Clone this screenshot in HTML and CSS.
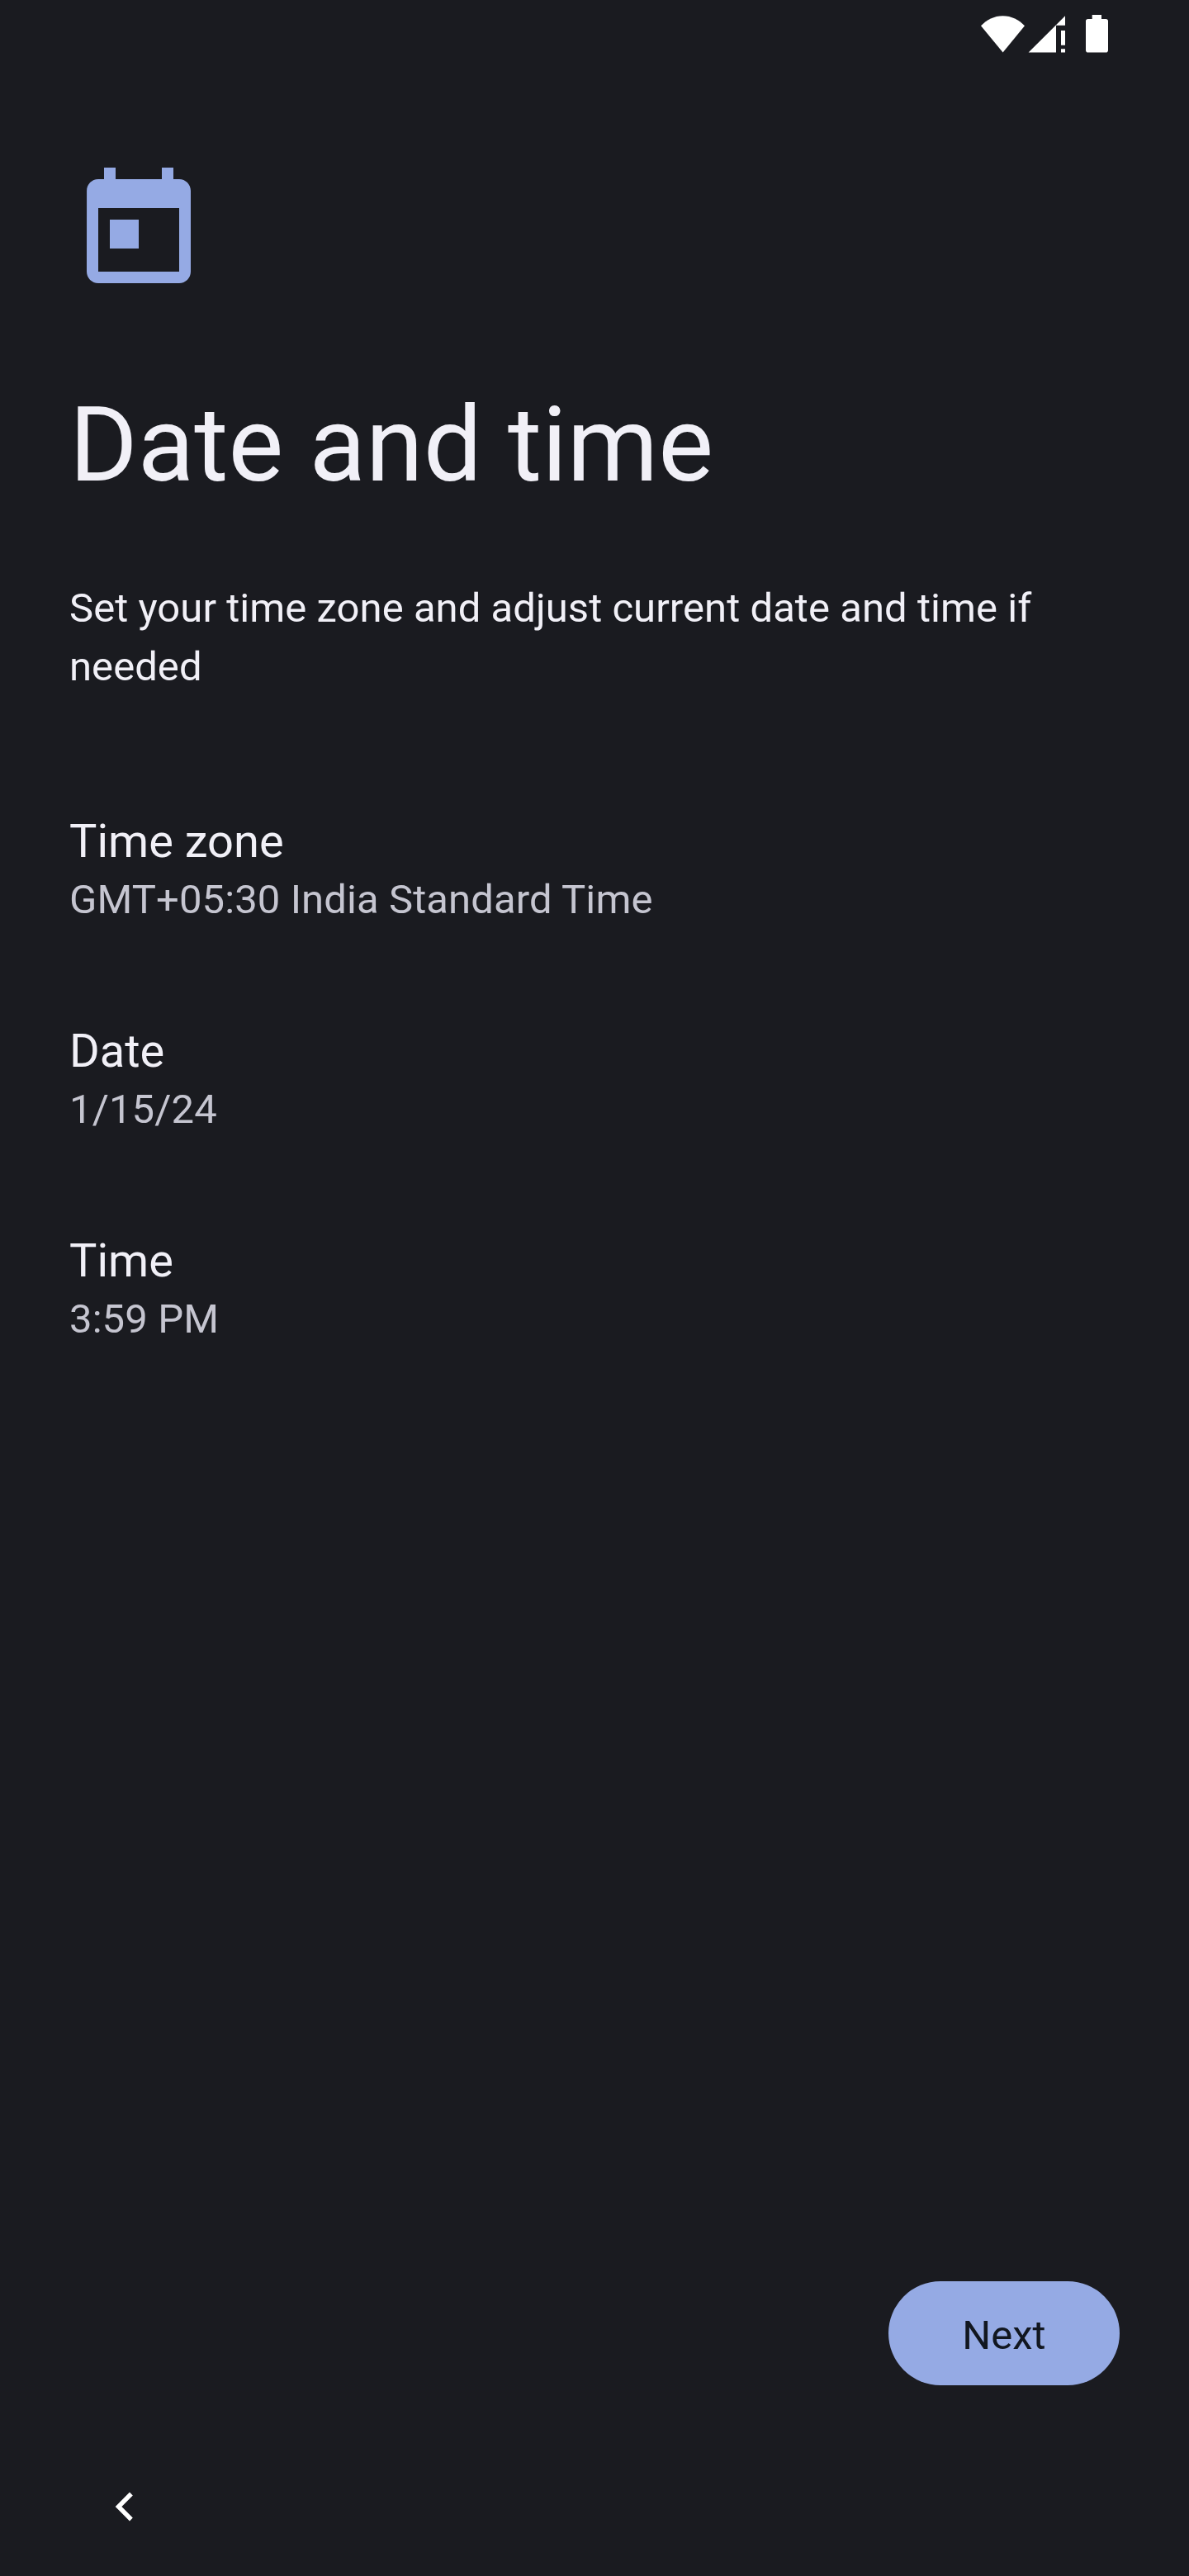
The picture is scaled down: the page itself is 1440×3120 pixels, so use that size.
FILE: index.html
```html
<!DOCTYPE html>
<html lang="en">
<head>
<meta charset="utf-8">
<title>Date and time</title>
<link rel="stylesheet" href="styles.css">
</head>
<body>
<div class="screen">
  <header class="status-bar">
    <svg class="status-icons" viewBox="1180 0 170 84" aria-hidden="true">
      <path d="M1188 31.2C1195 24 1204 19.2 1214.5 19.2S1234 24 1241 31.2L1214.6 63.4Z"/>
      <path d="M1290 19.2V30.8H1279V63.5H1245.6ZM1285 37h5v17.7h-5ZM1285 59.2h5v4.3h-5Z"/>
      <path d="M1322.7 18h11.3v5h5.2q2.8 0 2.8 2.8v34.9q0 2.8-2.8 2.8h-21.4q-2.8 0-2.8-2.8V25.8q0-2.8 2.8-2.8h4.9Z"/>
    </svg>
  </header>
  <main class="content">
    <svg class="hero-icon" viewBox="0 0 24 24" aria-hidden="true">
      <path d="M19 3h-1V1h-2v2H8V1H6v2H5c-1.11 0-1.99.9-1.99 2L3 19c0 1.1.89 2 2 2h14c1.1 0 2-.9 2-2V5c0-1.1-.9-2-2-2zm0 16H5V8h14v11zM7 10h5v5H7z"/>
    </svg>
    <h1 class="title">Date and time</h1>
    <p class="description">Set your time zone and adjust current date and time if needed</p>
    <div class="settings">
      <div class="setting">
        <div class="setting-name">Time zone</div>
        <div class="setting-value">GMT+05:30 India Standard Time</div>
      </div>
      <div class="setting">
        <div class="setting-name">Date</div>
        <div class="setting-value">1/15/24</div>
      </div>
      <div class="setting">
        <div class="setting-name">Time</div>
        <div class="setting-value">3:59 PM</div>
      </div>
    </div>
  </main>
  <footer class="footer">
    <button class="next">Next</button>
  </footer>
  <nav class="nav-bar">
    <svg class="back" viewBox="0 0 40 50" aria-label="Back">
      <path d="M28.9 9.5L13.5 25L28.9 40.5"/>
    </svg>
  </nav>
</div>
</body>
</html>
```

FILE: styles.css
```css
* {
  box-sizing: border-box;
}

body {
  margin: 0;
  background: #1a1b20;
  color: #f1f0f7;
  font-family: Roboto, sans-serif;
}

.screen {
  display: flex;
  flex-direction: column;
  width: 1440px;
  height: 3120px;
}

.status-bar {
  display: flex;
  justify-content: flex-end;
  height: 84px;
  padding-right: 90px;
}

.status-icons {
  width: 170px;
  height: 84px;
  fill: #fff;
}

.content {
  flex: 1;
  padding: 112px 84px 0;
}

.hero-icon {
  display: block;
  width: 168px;
  height: 168px;
  fill: #95aae4;
}

.title {
  margin: 101px 0 0;
  font-size: 126px;
  font-weight: 400;
  line-height: 148px;
}

.description {
  margin: 88px 0 0;
  font-size: 49px;
  letter-spacing: 0.05px;
  line-height: 71px;
}

.settings {
  display: flex;
  flex-direction: column;
  gap: 121px;
  margin-top: 143px;
}

.setting {
  display: flex;
  flex-direction: column;
  gap: 9px;
}

.setting-name {
  font-size: 56px;
  line-height: 66px;
}

.setting-value {
  color: #c5c5d0;
  font-size: 49px;
  letter-spacing: 0.1px;
  line-height: 58px;
}

.footer {
  display: flex;
  justify-content: flex-end;
  padding: 0 84px 63px;
}

.next {
  width: 280px;
  height: 126px;
  padding: 6px 0 0;
  border: 0;
  border-radius: 63px;
  background: #95aae4;
  color: #121720;
  font: 400 49px/58px Roboto, sans-serif;
}

.nav-bar {
  display: flex;
  align-items: center;
  height: 168px;
  padding-left: 130px;
}

.back {
  width: 40px;
  height: 50px;
  fill: none;
  stroke: #fff;
  stroke-width: 5.4;
}
```
